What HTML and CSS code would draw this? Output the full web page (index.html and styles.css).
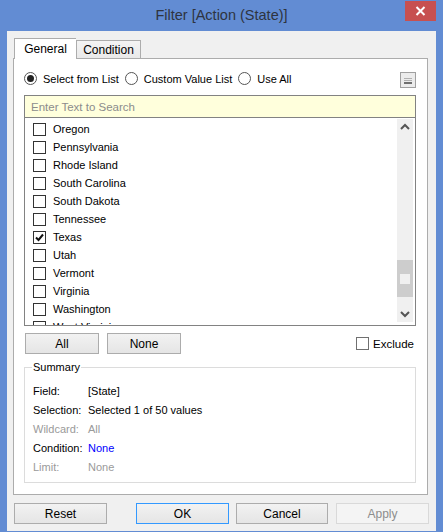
FILE: index.html
```html
<!DOCTYPE html>
<html>
<head>
<meta charset="utf-8">
<link rel="stylesheet" href="styles.css">
</head>
<body>
<div class="window">
  <div class="titlebar">
    <span class="title">Filter [Action (State)]</span>
    <div class="close"><svg width="11" height="10" viewBox="0 0 11 10"><path d="M1.5 1 L9.5 9 M9.5 1 L1.5 9" stroke="#fff" stroke-width="2"/></svg></div>
  </div>
  <div class="client">
    <div class="tabs">
      <div class="tab active">General</div>
      <div class="tab">Condition</div>
    </div>
    <div class="panel">
      <div class="radio-row">
        <label class="radio"><span class="circle on"></span>Select from List</label>
        <label class="radio"><span class="circle"></span>Custom Value List</label>
        <label class="radio"><span class="circle"></span>Use All</label>
        <div class="menu-btn"><span></span><span></span><span class="dark"></span></div>
      </div>
      <div class="search">Enter Text to Search</div>
      <div class="list">
        <div class="rows">
          <div class="row"><span class="cb"></span>Oregon</div>
          <div class="row"><span class="cb"></span>Pennsylvania</div>
          <div class="row"><span class="cb"></span>Rhode Island</div>
          <div class="row"><span class="cb"></span>South Carolina</div>
          <div class="row"><span class="cb"></span>South Dakota</div>
          <div class="row"><span class="cb"></span>Tennessee</div>
          <div class="row"><span class="cb"><svg width="11" height="11" viewBox="0 0 11 11"><path d="M2 5.5 L4.5 8 L9 2.5" stroke="#111" stroke-width="2" fill="none"/></svg></span>Texas</div>
          <div class="row"><span class="cb"></span>Utah</div>
          <div class="row"><span class="cb"></span>Vermont</div>
          <div class="row"><span class="cb"></span>Virginia</div>
          <div class="row"><span class="cb"></span>Washington</div>
          <div class="row"><span class="cb"></span>West Virginia</div>
        </div>
        <div class="scrollbar">
          <svg class="arrow" width="16" height="16" viewBox="0 0 16 16"><path d="M4 10 L8 6 L12 10" stroke="#555" stroke-width="2" fill="none"/></svg>
          <div class="track"><div class="thumb"><span></span></div></div>
          <svg class="arrow" width="16" height="16" viewBox="0 0 16 16"><path d="M4 6 L8 10 L12 6" stroke="#555" stroke-width="2" fill="none"/></svg>
        </div>
      </div>
      <div class="btn-row">
        <button class="btn small">All</button>
        <button class="btn small">None</button>
        <label class="exclude"><span class="cb plain"></span>Exclude</label>
      </div>
      <fieldset class="summary">
        <legend>Summary</legend>
        <div class="grid">
          <span>Field:</span><span>[State]</span>
          <span>Selection:</span><span>Selected 1 of 50 values</span>
          <span class="dim">Wildcard:</span><span class="dim">All</span>
          <span>Condition:</span><span class="link">None</span>
          <span class="dim">Limit:</span><span class="dim">None</span>
        </div>
      </fieldset>
    </div>
    <div class="footer">
      <button class="btn wide">Reset</button>
      <button class="btn wide ok">OK</button>
      <button class="btn wide cancel">Cancel</button>
      <button class="btn wide disabled">Apply</button>
    </div>
  </div>
</div>
</body>
</html>
```
FILE: styles.css
```css
* { box-sizing: border-box; }
html, body { margin: 0; padding: 0; }
body { font-family: "Liberation Sans", Arial, sans-serif; font-size: 11px; color: #000; }

.window {
  width: 443px; height: 532px;
  background: #628cd3;
  padding: 0 7px 1px 7px;
  display: flex; flex-direction: column;
  position: relative;
}
.titlebar {
  height: 31px;
  display: flex; align-items: center; justify-content: center;
  padding-bottom: 1px;
}
.title { font-size: 14.5px; color: #2e3440; }
.close {
  position: absolute; top: 1px; right: 7px;
  width: 31px; height: 20px;
  background: #c75050;
  display: flex; align-items: center; justify-content: center;
}

.client {
  flex: 1;
  background: #f0f0f0;
  padding: 7px 7px 0 6px;
  display: flex; flex-direction: column;
}
.tabs { display: flex; align-items: flex-end; margin-left: 1px; height: 20px; position: relative; z-index: 1; }
.tab {
  height: 18px; padding: 0 9px;
  border: 1px solid #acacac; border-bottom: none;
  background: linear-gradient(#f4f4f4, #e9e9e9);
  display: flex; align-items: center;
  font-size: 12px;
}
.tab.active {
  height: 21px; margin-bottom: -1px;
  background: #fff; border-right: none;
  width: 62px; justify-content: center;
}
.tab + .tab { width: 65px; justify-content: center; }

.panel {
  width: 415px;
  height: 437px;
  background: #fff;
  border: 1px solid #acacac;
  padding: 11px 11px 0 10px;
  display: flex; flex-direction: column;
}
.radio-row { display: flex; align-items: center; height: 17px; }
.radio { display: flex; align-items: center; font-size: 11px; margin-right: 6px; }
.circle {
  width: 13px; height: 13px; border-radius: 50%;
  border: 1px solid #555; margin-right: 6px; position: relative; background: #fff;
}
.circle.on::after {
  content: ""; position: absolute; left: 2px; top: 2px;
  width: 7px; height: 7px; border-radius: 50%; background: #222;
}
.menu-btn {
  margin-left: auto; margin-top: 2px;
  width: 16px; height: 16px;
  border: 1px solid #a0a0a0; background: #ececec;
  display: flex; flex-direction: column; justify-content: center; align-items: center; gap: 1px;
  padding-top: 2px;
}
.menu-btn span { width: 8px; height: 1px; background: #b0b0b0; }
.menu-btn span.dark { height: 2px; background: #707070; }

.search {
  margin-top: 8px;
  height: 23px;
  border: 1px solid #828282;
  background: #ffffdc;
  color: #8c8c8c;
  padding-left: 6px;
  display: flex; align-items: center;
  font-size: 11.5px;
}
.list {
  height: 208px;
  border: 1px solid #828282; border-top: none;
  display: flex;
  overflow: hidden;
}
.rows { flex: 1; padding: 2px 0 0 8px; overflow: hidden; }
.row { height: 18px; display: flex; align-items: center; font-size: 11px; }
.cb {
  width: 13px; height: 13px; border: 1px solid #333; background: #fff;
  margin-right: 7px; flex: none;
  display: flex; align-items: center; justify-content: center;
}
.scrollbar {
  width: 16px; margin: 1px 2px 3px 0;
  background: #f0f0f0;
  display: flex; flex-direction: column;
}
.arrow { flex: none; }
.track { flex: 1; padding-top: 125px; }
.thumb {
  height: 37px; background: #cdcdcd;
  display: flex; align-items: center; justify-content: center;
}
.thumb span { width: 10px; height: 10px; background: #f0f0f0; }

.btn {
  font-family: inherit; font-size: 12px; color: #000;
  height: 21px; padding: 0; flex: none;
  border: 1px solid #acacac;
  background: linear-gradient(#f2f2f2, #e5e5e5);
  display: flex; align-items: center; justify-content: center;
}
.btn-row { display: flex; align-items: center; margin-top: 7px; padding-left: 1px; height: 21px; }
.btn.small { width: 74px; }
.btn.small + .btn.small { margin-left: 8px; }
.exclude { margin-left: auto; display: flex; align-items: center; font-size: 11.5px; margin-right: 2px; }
.cb.plain { border-color: #707070; margin-right: 4px; }

.summary {
  margin: 7px 0 0 0;
  padding: 0 0 0 8px;
  height: 122px;
  border: 1px solid #dcdcdc;
  min-width: 0;
}
.summary legend { padding: 0 1px; font-size: 11px; margin-left: -1px; }
.grid {
  display: grid; grid-template-columns: 55px 1fr;
  grid-auto-rows: 19px; align-items: center;
  margin-top: 8px;
  font-size: 11px;
}
.dim { color: #9a9a9a; }
.link { color: #0000ff; }

.footer { display: flex; margin-top: 8px; padding-left: 1px; }
.btn.wide { width: 93px; }
.btn.ok { margin-left: 29px; border-color: #3399ff; }
.btn.cancel { margin-left: 7px; width: 92px; }
.btn.disabled { margin-left: 8px; color: #8d8d8d; border-color: #d9d9d9; background: #f4f4f4; }
```
